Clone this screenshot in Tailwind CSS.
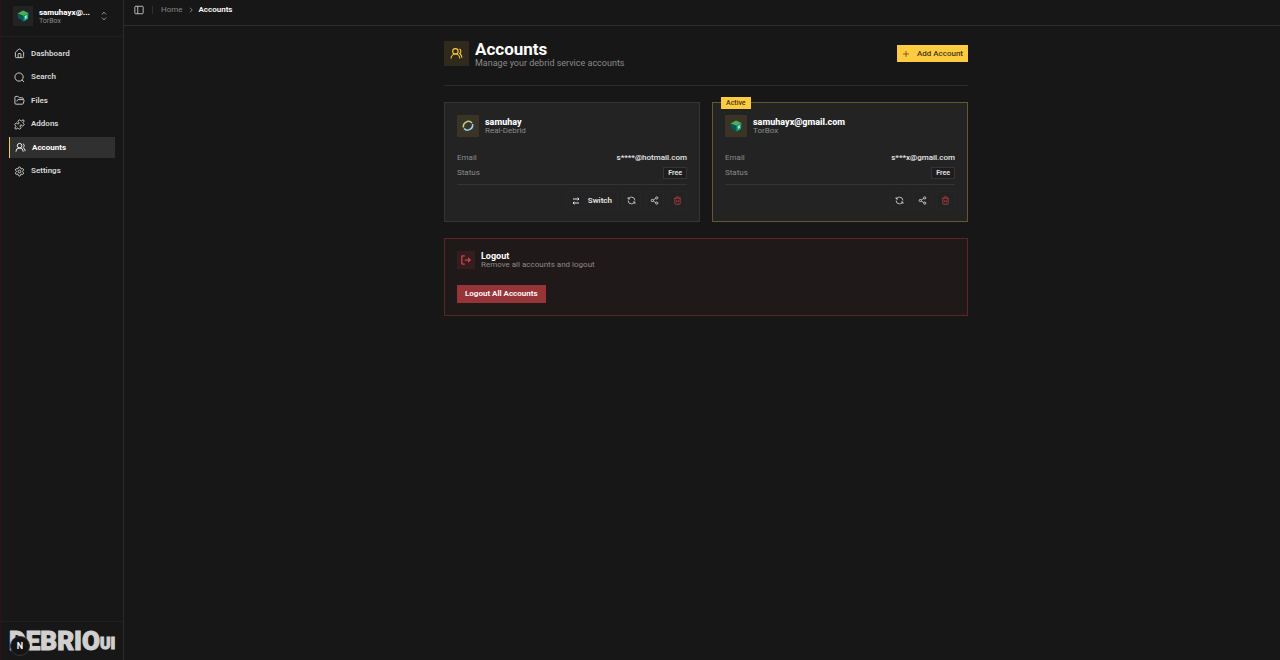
<!DOCTYPE html>
<html lang="en">
<head>
    <meta charset="UTF-8">
    <meta name="viewport" content="width=device-width, initial-scale=1">
    <title>Accounts - Debrio UI</title>
    <script src="https://cdn.jsdelivr.net/npm/@tailwindcss/browser@4"></script>
</head>
<body class="min-h-screen flex bg-[#171717] text-[#e5e5e5] font-['Roboto','Noto_Sans',sans-serif] text-[8px] leading-[10px]">

<!-- Icons -->
<svg class="hidden" xmlns="http://www.w3.org/2000/svg">
    <symbol id="users" viewBox="0 0 24 24"><path d="M18 21a8 8 0 0 0-16 0"/><circle cx="10" cy="8" r="5"/><path d="M22 20c0-3.37-2-6.5-4-8a5 5 0 0 0-.45-8.3"/></symbol>
    <symbol id="refresh" viewBox="0 0 24 24"><path d="M21 12a9 9 0 0 0-9-9 9.75 9.75 0 0 0-6.74 2.74L3 8"/><path d="M3 3v5h5"/><path d="M3 12a9 9 0 0 0 9 9 9.75 9.75 0 0 0 6.74-2.74L21 16"/><path d="M16 16h5v5"/></symbol>
    <symbol id="share" viewBox="0 0 24 24"><circle cx="18" cy="5" r="3"/><circle cx="6" cy="12" r="3"/><circle cx="18" cy="19" r="3"/><path d="m8.59 13.51 6.83 3.98M15.41 6.51l-6.82 3.98"/></symbol>
    <symbol id="trash" viewBox="0 0 24 24"><path d="M3 6h18M19 6v14a2 2 0 0 1-2 2H7a2 2 0 0 1-2-2V6M8 6V4a2 2 0 0 1 2-2h4a2 2 0 0 1 2 2v2M10 11v6M14 11v6"/></symbol>
    <symbol id="torbox" viewBox="0 0 24 24"><path fill="#4fae52" d="M1 7 12 1l11 5-10 6z"/><path fill="#07565b" d="m1 7 12 5v11L2 16z"/><path fill="#14a085" d="m13 12 10-6-1 12-9 5z"/><path fill="#b5f0d8" d="m16 12 4-2-1 4 2 0-5 5 1-4h-2z"/></symbol>
</svg>

<!-- Sidebar -->
<aside class="w-[124px] shrink-0 flex flex-col border-l border-l-[#30101b] border-r border-r-[#2b2b2b]">
    <button class="h-[37px] pl-3 pr-3.5 pb-1 flex items-center text-left border-b border-[#202020]">
        <span class="size-[20px] flex items-center justify-center bg-[#232323]"><svg class="size-3"><use href="#torbox"/></svg></span>
        <span class="ml-1.5 flex-1 min-w-0">
            <span class="block text-[8px] leading-[9px] font-extrabold text-white">samuhayx@...</span>
            <span class="block text-[7px] leading-[8px] text-[#8b8b8b]">TorBox</span>
        </span>
        <svg class="size-[10px] fill-none stroke-[#b5b5b5] stroke-2" viewBox="0 0 24 24"><path d="m7 16 5 5 5-5M7 8l5-5 5 5"/></svg>
    </button>
    <nav class="flex-1 flex flex-col gap-[3px] pt-1.5 pl-2 pr-2 font-semibold text-[#d8d8d8]">
        <a href="#" class="h-[21px] pl-[5px] flex items-center gap-1.5">
            <svg class="size-[11px] fill-none stroke-current stroke-2" viewBox="0 0 24 24"><path d="M15 21v-8a1 1 0 0 0-1-1h-4a1 1 0 0 0-1 1v8"/><path d="M3 10a2 2 0 0 1 .71-1.53l7-6a2 2 0 0 1 2.58 0l7 6A2 2 0 0 1 21 10v9a2 2 0 0 1-2 2H5a2 2 0 0 1-2-2z"/></svg>
            Dashboard
        </a>
        <a href="#" class="h-[20px] pl-[5px] flex items-center gap-1.5">
            <svg class="size-[11px] fill-none stroke-current stroke-2" viewBox="0 0 24 24"><circle cx="11" cy="11" r="9"/><path d="m22 22-4.500-4.500"/></svg>
            Search
        </a>
        <a href="#" class="h-[21px] pl-[5px] flex items-center gap-1.5">
            <svg class="size-[11px] fill-none stroke-current stroke-2" viewBox="0 0 24 24"><path d="m6 14 1.500-2.900A2 2 0 0 1 9.240 10H20a2 2 0 0 1 1.940 2.500l-1.540 6a2 2 0 0 1-1.950 1.500H4a2 2 0 0 1-2-2V5a2 2 0 0 1 2-2h3.900a2 2 0 0 1 1.690.9l.81 1.200a2 2 0 0 0 1.670.9H18a2 2 0 0 1 2 2v2"/></svg>
            Files
        </a>
        <a href="#" class="h-[20px] pl-[5px] flex items-center gap-1.5">
            <svg class="size-[11px] fill-none stroke-current stroke-2" viewBox="0 0 24 24"><path d="M15.390 4.390a1 1 0 0 0 1.680-.474 2.500 2.500 0 1 1 3.014 3.015 1 1 0 0 0-.474 1.680l1.683 1.682a2.414 2.414 0 0 1 0 3.414L19.610 15.390a1 1 0 0 1-1.680-.474 2.500 2.500 0 1 0-3.014 3.015 1 1 0 0 1 .474 1.680l-1.683 1.682a2.414 2.414 0 0 1-3.414 0L8.610 19.610a1 1 0 0 0-1.680.474 2.500 2.500 0 1 1-3.014-3.015 1 1 0 0 0 .474-1.680l-1.683-1.682a2.414 2.414 0 0 1 0-3.414L4.390 8.610a1 1 0 0 1 1.680.474 2.500 2.500 0 1 0 3.014-3.015 1 1 0 0 1-.474-1.680l1.683-1.682a2.414 2.414 0 0 1 3.414 0z"/></svg>
            Addons
        </a>
        <a href="#" class="h-[21px] pl-[5px] flex items-center gap-1.5 border-l border-l-[#fecb41] bg-[#303030] font-bold text-white">
            <svg class="size-[11px] fill-none stroke-current stroke-2"><use href="#users"/></svg>
            Accounts
        </a>
        <a href="#" class="h-[20px] pl-[5px] flex items-center gap-1.5">
            <svg class="size-[11px] fill-none stroke-current stroke-2" viewBox="0 0 24 24"><path d="M9.670 4.140a2.340 2.340 0 0 1 4.660 0 2.340 2.340 0 0 0 3.320 1.910 2.340 2.340 0 0 1 2.330 4.030 2.340 2.340 0 0 0 0 3.830 2.340 2.340 0 0 1-2.330 4.030 2.340 2.340 0 0 0-3.320 1.920 2.340 2.340 0 0 1-4.660 0 2.340 2.340 0 0 0-3.320-1.920 2.340 2.340 0 0 1-2.330-4.030 2.340 2.340 0 0 0 0-3.830 2.340 2.340 0 0 1 2.330-4.030 2.340 2.340 0 0 0 3.320-1.910"/><circle cx="12" cy="12" r="3"/></svg>
            Settings
        </a>
    </nav>
    <div class="relative h-[39px] pl-2 flex items-center border-t border-[#202020] text-[#d0d0d0] font-black">
        <span class="text-[26px] leading-[26px] [-webkit-text-stroke:1px_#d0d0d0]">DEBRIO</span>
        <span class="pt-1.5 text-[16px] leading-[16px] [-webkit-text-stroke:1px_#d0d0d0]">UI</span>
        <button class="absolute left-[9px] bottom-1 size-5 rounded-full bg-[#141414] border border-[#343434] flex items-center justify-center text-[9px] font-semibold text-white">N</button>
    </div>
</aside>

<div class="flex-1 min-w-0">
    <!-- Breadcrumb -->
    <header class="h-[26px] pl-2.5 pb-[5px] flex items-center border-b border-[#2e2e2e]">
        <button aria-label="Toggle sidebar"><svg class="size-[10px] fill-none stroke-[#d5d5d5] stroke-2" viewBox="0 0 24 24"><rect x="2" y="3" width="20" height="18" rx="2"/><path d="M9 3v18"/></svg></button>
        <span class="ml-2 w-px h-2 bg-[#303030]"></span>
        <nav class="ml-2 flex items-center gap-[5px]">
            <a href="#" class="text-[#858585]">Home</a>
            <svg class="size-[6px] fill-none stroke-[#a0a0a0] stroke-3" viewBox="0 0 24 24"><path d="m8 3 9 9-9 9"/></svg>
            <span class="font-semibold text-white">Accounts</span>
        </nav>
    </header>

    <main class="pl-2 pt-[15px]">
      <div class="max-w-[524px] mx-auto">
        <!-- Page title -->
        <div class="h-[45px] flex items-start border-b border-[#2b2b2b]">
            <span class="size-[25px] flex items-center justify-center bg-[#2f2a1b] text-[#fecb41]"><svg class="size-[13px] fill-none stroke-current stroke-2"><use href="#users"/></svg></span>
            <div class="ml-1.5 flex-1">
                <h1 class="text-[17px] leading-[16px] font-bold text-white">Accounts</h1>
                <p class="text-[9px] leading-[12px] text-[#8b8b8b]">Manage your debrid service accounts</p>
            </div>
            <button class="mt-1 h-[17px] px-[5px] flex items-center gap-[7px] bg-[#fecb41] text-[#443714] font-medium"><svg class="size-[8px] fill-none stroke-current stroke-2" viewBox="0 0 24 24"><path d="M3 12h18M12 3v18"/></svg>Add Account</button>
        </div>

        <!-- Account cards -->
        <div class="mt-4 grid grid-cols-2 gap-3">
            <section class="h-[120px] px-3 pt-3 border border-[#343434] bg-[#232323]">
                <div class="flex items-start gap-1.5">
                    <span class="size-[22px] flex items-center justify-center bg-[#393426]">
                        <svg class="size-3 fill-none stroke-3" viewBox="0 0 24 24"><path stroke="#b8d589" d="M3 15A10 10 0 0 1 20 6"/><path stroke="#9bd4ee" d="M21 8A10 10 0 0 1 4 17"/></svg>
                    </span>
                    <div class="pt-0.5">
                        <h2 class="text-[9px] leading-[10px] font-extrabold text-white">samuhay</h2>
                        <p class="leading-[8px] text-[#8b8b8b]">Real-Debrid</p>
                    </div>
                </div>
                <dl class="mt-[13px]">
                    <div class="h-[15px] flex items-center justify-between"><dt class="text-[#8b8b8b]">Email</dt><dd class="font-medium">s****@hotmail.com</dd></div>
                    <div class="h-[15px] flex items-center justify-between"><dt class="text-[#8b8b8b]">Status</dt><dd class="h-[12px] px-1 flex items-center border border-[#343434] bg-[#1d1d1d] text-[7px] font-semibold">Free</dd></div>
                </dl>
                <div class="mt-1 pt-1.5 flex justify-end gap-1 border-t border-[#343434]">
                    <button class="h-[19px] px-[5px] flex items-center gap-2 border border-[#262626] font-semibold"><svg class="size-[8px] fill-none stroke-current stroke-3" viewBox="0 0 24 24"><path d="m17 2 4 4-4 4M3 6h18M7 14l-4 4 4 4M21 18H3"/></svg>Switch</button>
                    <button aria-label="Refresh" class="size-[19px] flex items-center justify-center border border-[#262626]"><svg class="size-[9px] fill-none stroke-current stroke-2"><use href="#refresh"/></svg></button>
                    <button aria-label="Share" class="size-[19px] flex items-center justify-center border border-[#262626]"><svg class="size-[9px] fill-none stroke-current stroke-2"><use href="#share"/></svg></button>
                    <button aria-label="Delete" class="size-[19px] flex items-center justify-center border border-[#262626] text-[#c93f43]"><svg class="size-[9px] fill-none stroke-current stroke-2"><use href="#trash"/></svg></button>
                </div>
            </section>

            <section class="relative h-[120px] px-3 pt-3 border border-[#65572c] bg-[#232323]">
                <span class="absolute -top-[6px] left-2 h-[12px] px-[5px] flex items-center bg-[#fecb41] text-[#443714] text-[7px] font-medium">Active</span>
                <div class="flex items-start gap-1.5">
                    <span class="size-[22px] flex items-center justify-center bg-[#393426]"><svg class="size-3"><use href="#torbox"/></svg></span>
                    <div class="pt-0.5">
                        <h2 class="text-[9px] leading-[10px] font-extrabold text-white">samuhayx@gmail.com</h2>
                        <p class="leading-[8px] text-[#8b8b8b]">TorBox</p>
                    </div>
                </div>
                <dl class="mt-[13px]">
                    <div class="h-[15px] flex items-center justify-between"><dt class="text-[#8b8b8b]">Email</dt><dd class="font-medium">s***x@gmail.com</dd></div>
                    <div class="h-[15px] flex items-center justify-between"><dt class="text-[#8b8b8b]">Status</dt><dd class="h-[12px] px-1 flex items-center border border-[#343434] bg-[#1d1d1d] text-[7px] font-semibold">Free</dd></div>
                </dl>
                <div class="mt-1 pt-1.5 flex justify-end gap-1 border-t border-[#343434]">
                    <button aria-label="Refresh" class="size-[19px] flex items-center justify-center border border-[#262626]"><svg class="size-[9px] fill-none stroke-current stroke-2"><use href="#refresh"/></svg></button>
                    <button aria-label="Share" class="size-[19px] flex items-center justify-center border border-[#262626]"><svg class="size-[9px] fill-none stroke-current stroke-2"><use href="#share"/></svg></button>
                    <button aria-label="Delete" class="size-[19px] flex items-center justify-center border border-[#262626] text-[#c93f43]"><svg class="size-[9px] fill-none stroke-current stroke-2"><use href="#trash"/></svg></button>
                </div>
            </section>
        </div>

        <!-- Logout -->
        <section class="mt-4 h-[78px] px-3 pt-3 border border-[#5f2426] bg-[#201919]">
            <div class="flex items-start gap-1.5">
                <span class="size-[18px] flex items-center justify-center bg-[#341d1e] text-[#d2444a]"><svg class="size-[10px] fill-none stroke-current stroke-3" viewBox="0 0 24 24"><path d="M9 22H4a2 2 0 0 1-2-2V4a2 2 0 0 1 2-2h5M17 17l5-5-5-5M22 12H9"/></svg></span>
                <div>
                    <h2 class="text-[9px] leading-[10px] font-bold text-white">Logout</h2>
                    <p class="leading-[8px] text-[#8b8b8b]">Remove all accounts and logout</p>
                </div>
            </div>
            <button class="mt-4 h-[18px] px-2 bg-[#973438] font-semibold text-white">Logout All Accounts</button>
        </section>
      </div>
    </main>
</div>

</body>
</html>
